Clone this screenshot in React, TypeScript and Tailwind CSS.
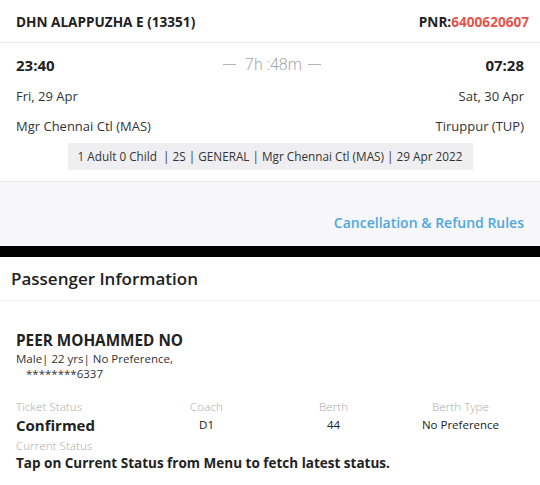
export default function App() {
  return (
    <div className="w-[540px] h-[485px] overflow-hidden bg-white font-['Open_Sans',sans-serif] text-[#222]">
      {/* train header */}
      <div className="flex h-[43px] items-center justify-between pl-4 pr-[11px] pt-[2px] border-b border-[#e4e4e4]">
        <span className="text-[13.6px] font-bold">DHN ALAPPUZHA E (13351)</span>
        <span className="text-[13.6px] font-bold">
          PNR:<span className="text-[#e5534b]">6400620607</span>
        </span>
      </div>

      {/* journey */}
      <div className="px-4 pt-[10px] pb-[11px] border-b border-[#e8e8e8]">
        <div className="flex h-[24px] items-center justify-between">
          <span className="text-[15px] font-bold">23:40</span>
          <div className="flex items-center gap-[9px] font-['Roboto',sans-serif] text-[16px] font-light text-[#a8a8a8] -mt-[1px] pl-[4px]">
            <span className="h-px w-[13px] bg-[#b4b4b4]" />
            <span>7h :48m</span>
            <span className="h-px w-[13px] bg-[#b4b4b4] -ml-[3px]" />
          </div>
          <span className="text-[15px] font-bold">07:28</span>
        </div>
        <div className="flex h-[30px] items-center justify-between text-[13px] text-[#333] mt-[5px]">
          <span>Fri, 29 Apr</span>
          <span>Sat, 30 Apr</span>
        </div>
        <div className="flex h-[30px] items-center justify-between text-[13px] text-[#333]">
          <span>Mgr Chennai Ctl (MAS)</span>
          <span>Tiruppur (TUP)</span>
        </div>
        <div className="flex justify-center mt-[1px]">
          <div className="flex h-[27px] w-[405px] items-center justify-center bg-[#efeff1] text-[11.75px] text-[#333]">
            1 Adult 0 Child &nbsp;| 2S | GENERAL | Mgr Chennai Ctl (MAS) | 29 Apr 2022
          </div>
        </div>
      </div>

      {/* rules */}
      <div className="flex h-[64px] items-end justify-end bg-[#f7f7f9] px-4 pb-[13px]">
        <span className="text-[14px] font-semibold text-[#4ea7df]">
          Cancellation &amp; Refund Rules
        </span>
      </div>

      <div className="h-[11px] bg-black" />

      {/* passenger */}
      <div className="flex h-[44px] items-center px-[11px] border-b border-[#ececec]">
        <span className="text-[17px] font-semibold text-[#222]">Passenger Information</span>
      </div>

      <div className="px-4 pt-[28px]">
        <div className="text-[15.3px] font-bold leading-[22px]">PEER MOHAMMED NO</div>
        <div className="text-[11.5px] leading-[16px] text-[#333]">Male| 22 yrs| No Preference,</div>
        <div className="text-[11.5px] leading-[14px] text-[#333] pl-[10px]">********6337</div>

        <div className="grid grid-cols-4 mt-[18px]">
          <span className="text-[11.7px] leading-[15px] font-light text-[#aaa]">Ticket Status</span>
          <span className="text-[11.7px] leading-[15px] font-light text-[#aaa] text-center">Coach</span>
          <span className="text-[11.7px] leading-[15px] font-light text-[#aaa] text-center">Berth</span>
          <span className="text-[11.7px] leading-[15px] font-light text-[#aaa] text-center">Berth Type</span>

          <span className="text-[15px] font-bold leading-[22px]">Confirmed</span>
          <span className="text-[11.5px] leading-[22px] font-medium text-center">D1</span>
          <span className="text-[11.5px] leading-[22px] font-medium text-center">44</span>
          <span className="text-[11.5px] leading-[22px] font-medium text-center">No Preference</span>
        </div>
        <div className="text-[11.7px] leading-[15px] font-light text-[#aaa] mt-[2px]">Current Status</div>
        <div className="text-[13.5px] font-bold leading-[20px]">
          Tap on Current Status from Menu to fetch latest status.
        </div>
      </div>
    </div>
  );
}
